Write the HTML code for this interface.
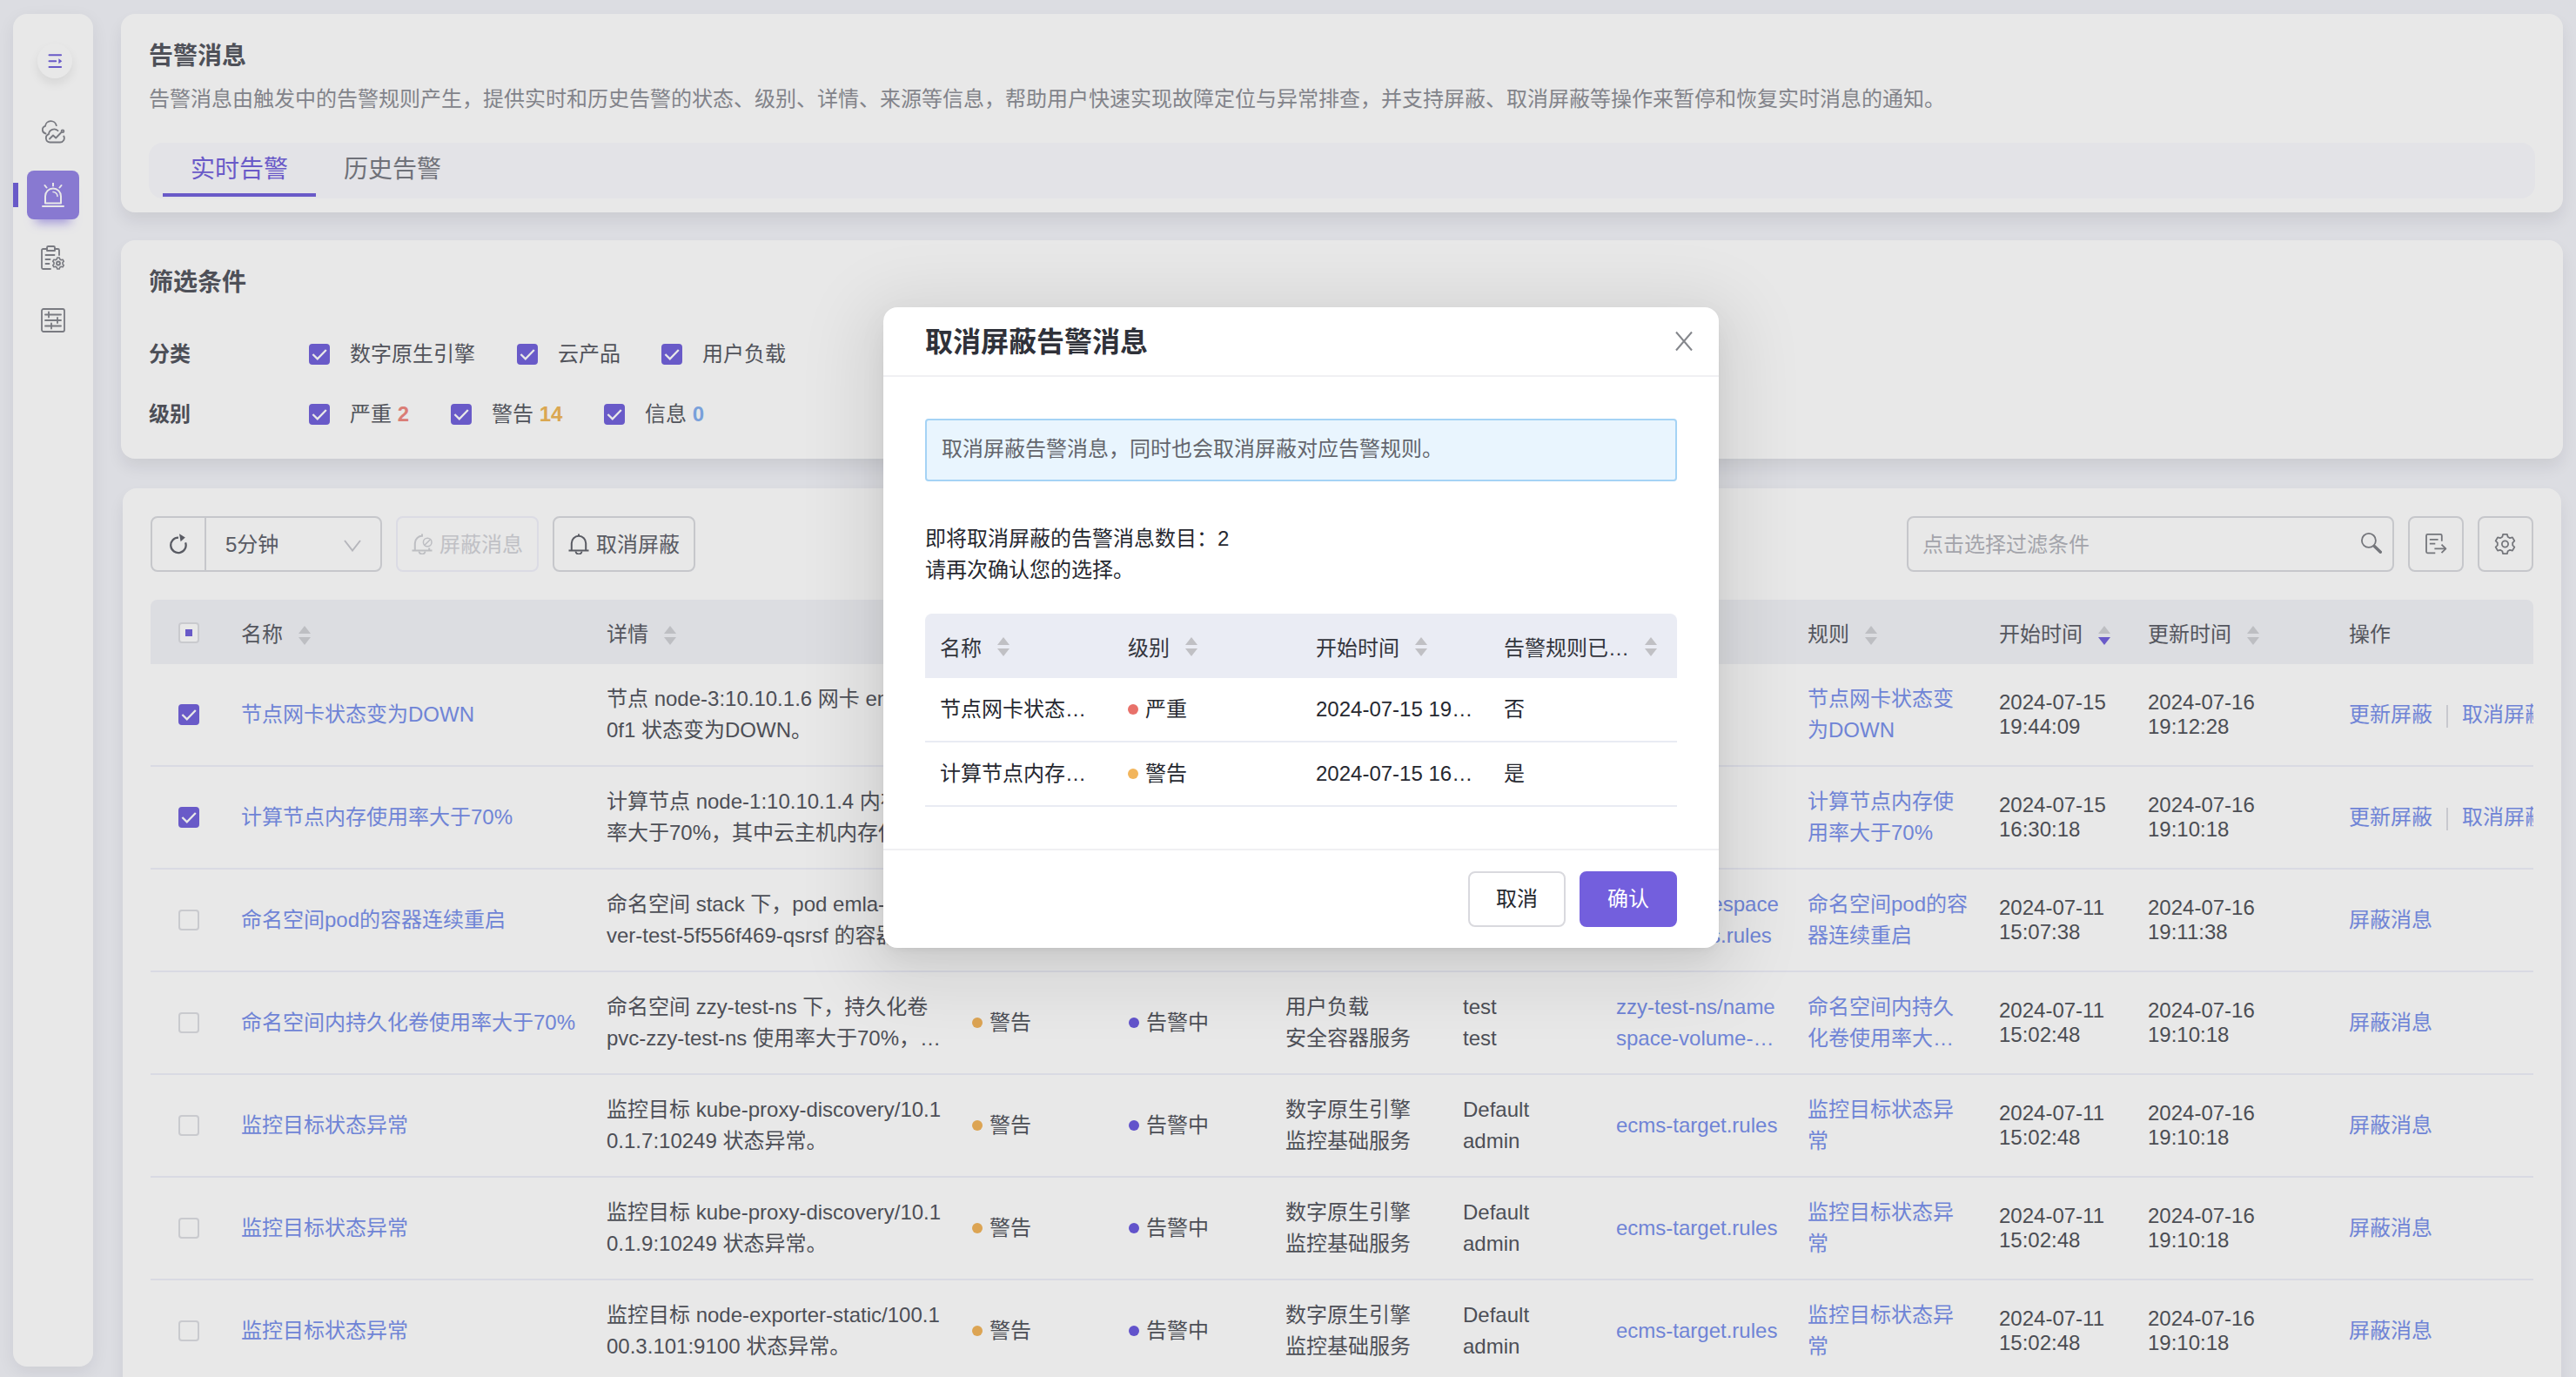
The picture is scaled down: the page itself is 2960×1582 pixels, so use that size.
<!DOCTYPE html>
<html lang="zh-CN"><head><meta charset="utf-8"><title>告警消息</title>
<style>
*{box-sizing:border-box;margin:0;padding:0}
html,body{width:2960px;height:1582px;overflow:hidden}
body{background:#f2f3f9;font-family:"Liberation Sans","Noto Sans CJK SC",sans-serif;color:#3f4149;font-size:24px;position:relative}
i{font-style:normal}
a{color:inherit;text-decoration:none}
/* sidebar */
.side{position:absolute;left:15px;top:16px;width:92px;height:1554px;background:#fff;border-radius:16px;box-shadow:0 6px 20px rgba(8,8,14,.07)}
.collapse{position:absolute;left:28px;top:34px;width:40px;height:40px;border-radius:50%;background:#fff;box-shadow:0 6px 12px rgba(0,0,0,.08)}
.collapse svg{position:absolute;left:0;top:0;width:40px;height:40px}
.nav{position:absolute;left:16px;width:60px;height:56px;border-radius:8px}
.nav svg{position:absolute;left:16px;top:14px;width:28px;height:28px}
.nav.act{background:#9686e6;box-shadow:0 14px 12px -10px rgba(125,105,230,.6)}
.ind{position:absolute;left:0;top:194px;width:6px;height:28px;background:#7463dc}
/* cards */
.card{position:absolute;left:139px;width:2806px;background:#fff;border-radius:16px;box-shadow:0 10px 18px rgba(8,8,14,.07)}
.c1{top:16px;height:228px}
.c2{top:276px;height:251px}
.c3{left:141px;width:2802px;top:561px;height:1100px}
.h1{position:absolute;left:32px;font-size:28px;font-weight:700;color:#565861;line-height:40px;white-space:nowrap}
.desc{position:absolute;left:32px;top:82px;font-size:24px;line-height:32px;color:#8f9198;white-space:nowrap}
.tabs{position:absolute;left:32px;top:148px;width:2742px;height:64px;background:#fafafe;border-radius:16px}
.tab{position:absolute;top:0;height:64px;line-height:62px;font-size:28px;color:#7b7d85;padding:0 32px;white-space:nowrap}
.tab.act{color:#7463dc}
.tab.act:after{content:"";position:absolute;left:0;right:0;bottom:2px;height:4px;background:#7463dc}
/* filter */
.flabel{position:absolute;left:32px;font-size:24px;font-weight:700;color:#54565f;line-height:32px}
.fitem{position:absolute;font-size:24px;color:#5a5c65;line-height:32px;white-space:nowrap}
.cb{display:inline-block;width:24px;height:24px;border-radius:4px;border:2px solid #dddee3;background:#fff;vertical-align:middle;position:relative}
.cb.on{background:#7463dc;border-color:#7463dc}
.cb svg{position:absolute;left:-2px;top:-2px;width:24px;height:24px}
.cb.part:after{content:"";position:absolute;left:6px;top:6px;width:8px;height:8px;background:#7463dc}
.fitem .cb{position:absolute;left:0;top:4px}
.fitem span.t{margin-left:47px}
.fitem b{font-weight:700}
/* toolbar */
.btn{position:absolute;top:32px;height:64px;border:2px solid #dadbe0;border-radius:8px;background:#fff;font-size:24px;line-height:62px;color:#62646d;white-space:nowrap}
.btn svg{position:absolute}
.btn.dis{color:#d3d4d9;border-color:#f1f1fb;background:#fff}
.search{color:#b4b5bc}
/* table */
table{border-collapse:separate;border-spacing:0;table-layout:fixed}
.tbl{position:absolute;left:32px;top:128px;width:2738px}
.tbl th{line-height:36px;padding-top:6px!important;height:74px;background:#f2f3f8;font-weight:400;text-align:left;font-size:24px;color:#5d5f68;padding:0 0 0 16px;white-space:nowrap}
.tbl th:first-child{border-radius:8px 0 0 0}
.tbl th:last-child{border-radius:0 8px 0 0}
.tbl td{height:118px;border-bottom:2px solid #eff0fa;font-size:24px;line-height:36px;color:#55575f;padding:0 0 0 16px;vertical-align:middle;white-space:nowrap;overflow:hidden}
.tbl td.tm{line-height:28px;color:#53555c}
.lnk{color:#7b92ec!important}
.dot{display:inline-block;width:12px;height:12px;border-radius:50%;margin-right:8px;vertical-align:middle;position:relative;top:-2px}
.sort{display:inline-block;position:relative;width:14px;height:24px;margin-left:18px;vertical-align:middle;top:-1px}
.sort i{position:absolute;left:0;width:0;height:0;border-left:7px solid transparent;border-right:7px solid transparent}
.sort .up{top:1px;border-bottom:9px solid #c4c5cb}
.sort .dn{bottom:1px;border-top:9px solid #c4c5cb}
.sort .dn.act{border-top-color:#7463dc}
.c-chk{padding-left:32px!important}
.vd{display:inline-block;width:2px;height:26px;background:#dcdde3;margin:0 16px;vertical-align:middle}
/* mask+modal */
.mask{position:absolute;left:0;top:0;width:2960px;height:1582px;background:rgba(0,0,0,.09)}
.modal{position:absolute;left:1015px;top:353px;width:960px;height:736px;background:#fff;border-radius:16px;box-shadow:0 6px 12px -8px rgba(0,0,0,.12),0 12px 32px 0 rgba(0,0,0,.05),0 16px 80px 24px rgba(0,0,0,.09);color:#262830}
.mtitle{position:absolute;left:48px;top:18px;font-size:32px;font-weight:700;line-height:44px;color:#2f3139}
.mclose{position:absolute;left:909px;top:27px;width:22px;height:24px;line-height:0}
.mhr{position:absolute;left:0;width:960px;height:2px;background:#f0f0f3}
.alert{position:absolute;left:48px;top:128px;width:864px;height:72px;border:2px solid #a5d3f5;background:#e9f5fe;border-radius:4px;font-size:24px;line-height:65px;padding-left:17px;color:#63656c}
.mtext{position:absolute;left:48px;top:248px;font-size:24px;line-height:36px;color:#262830}
.mtbl{position:absolute;left:48px;top:352px;width:864px}
.mtbl th{line-height:36px;padding-top:5px!important;height:74px;background:#eaecf4;font-weight:400;text-align:left;font-size:24px;color:#33353d;padding:0 0 0 17px;white-space:nowrap}
.mtbl th:first-child{border-radius:8px 0 0 0}
.mtbl th:last-child{border-radius:0 8px 0 0}
.mtbl td{line-height:36px;padding-bottom:0px!important;height:74px;border-bottom:2px solid #e9ebf3;font-size:24px;color:#262830;padding:0 0 0 17px;white-space:nowrap}
.mbtn{position:absolute;top:648px;width:112px;height:64px;border-radius:8px;font-size:24px;line-height:60px;text-align:center}
.mbtn.c{left:672px;border:2px solid #d9d9de;color:#262830;background:#fff}
.mbtn.ok{left:800px;border:2px solid #735fdd;background:#735fdd;color:#fff}

.tbl th .cb{top:-4px}
.tbl td .cb{top:-2px}

.tbl .sort .up{border-bottom-color:#d0d1d6}
.tbl .sort .dn{border-top-color:#d0d1d6}
.tbl .sort .dn.act{border-top-color:#7463dc}
.mtbl .sort .up{border-bottom-color:#c0c0c4}
.mtbl .sort .dn{border-top-color:#c0c0c4}

.mtbl .sort{top:-3px}

</style></head>
<body>
<div class="side">
  <div class="collapse"><svg viewBox="0 0 40 40"><path d="M13.500 13.300H27.100M13.500 20.200H21.200M13.500 27.100H27.100" stroke="#7463dc" stroke-width="2" stroke-linecap="round" fill="none"/><path d="M24.400 17.200L28.300 20.200 24.400 23.200z" fill="#7463dc"/></svg></div>
  <div class="nav" style="top:108px"><svg viewBox="0 0 28 28" fill="none" stroke="#85878e" stroke-width="1.8" stroke-linecap="round" stroke-linejoin="round"><path d="M5.5 15.5A4.5 4.5 0 0 1 5 6.800 6.500 6.500 0 0 1 17.800 6.200"/><path d="M10.500 25.500H22A4.800 4.800 0 0 0 26.300 18.500M10.500 25.500A4.800 4.800 0 0 1 9 16.200 6.200 6.200 0 0 1 19.500 12.200"/><path d="M10 21.500l4-4 3.200 3 6.300-6.500"/><circle cx="25" cy="12.800" r="1.400"/></svg></div>
  <div class="ind"></div>
  <div class="nav act" style="top:180px"><svg viewBox="0 0 28 28" fill="none" stroke="#fff" stroke-width="2" stroke-linecap="round"><path d="M5 23.500V15.500a9 9 0 0 1 18 0V23.500z" stroke-linejoin="round"/><path d="M2 27H26M14 .5v3M4.500 3l2 2.500M23.500 3l-2 2.500"/><path d="M14 10.500a5 5 0 0 1 5 5" stroke-width="1.600"/></svg></div>
  <div class="nav" style="top:252px"><svg viewBox="0 0 28 28" fill="none" stroke="#85878e" stroke-width="1.800" stroke-linecap="round" stroke-linejoin="round"><path d="M7 4H2.500A1.500 1.500 0 0 0 1 5.500v20A1.500 1.500 0 0 0 2.500 27H11M16 4h3.500A1.500 1.500 0 0 1 21 5.500V11"/><path d="M7 6V2.500A1.500 1.500 0 0 1 8.500 1h6A1.500 1.500 0 0 1 16 2.500V6z"/><path d="M5.500 11h10M5.500 16h5M5.500 21h4"/><circle cx="20" cy="20.500" r="2"/><path d="M18.800 14l2.400 0 .5 1.800 1.600 .9 1.800-.5 1.200 2.100-1.300 1.300v1.800l1.300 1.300-1.200 2.100-1.800-.5-1.600 .9-.5 1.800h-2.400l-.5-1.800-1.600-.9-1.800 .5-1.200-2.100 1.300-1.300v-1.800l-1.300-1.300 1.200-2.100 1.800 .5 1.600-.9z" stroke-width="1.600"/></svg></div>
  <div class="nav" style="top:324px"><svg viewBox="0 0 28 28" fill="none" stroke="#85878e" stroke-width="1.800" stroke-linecap="round" stroke-linejoin="round"><rect x="1" y="1" width="26" height="26" rx="2"/><path d="M5 7.500h18M5 14h18M5 20.500h18M9 4.500v6M19 11v6M12 17.500v6"/></svg></div>
</div>

<div class="card c1">
  <div class="h1" style="top:29px">告警消息</div>
  <div class="desc">告警消息由触发中的告警规则产生，提供实时和历史告警的状态、级别、详情、来源等信息，帮助用户快速实现故障定位与异常排查，并支持屏蔽、取消屏蔽等操作来暂停和恢复实时消息的通知。</div>
  <div class="tabs">
    <div class="tab act" style="left:16px">实时告警</div>
    <div class="tab" style="left:192px">历史告警</div>
  </div>
</div>

<div class="card c2">
  <div class="h1" style="top:29px">筛选条件</div>
  <div class="flabel" style="top:115px">分类</div>
  <div class="fitem" style="left:216px;top:115px"><span class="cb on"><svg viewBox="0 0 24 24"><path d="M4.400 12l5.400 5.400L19.800 7" fill="none" stroke="#fff" stroke-width="2.300"/></svg></span><span class="t">数字原生引擎</span></div>
  <div class="fitem" style="left:455px;top:115px"><span class="cb on"><svg viewBox="0 0 24 24"><path d="M4.400 12l5.400 5.400L19.800 7" fill="none" stroke="#fff" stroke-width="2.300"/></svg></span><span class="t">云产品</span></div>
  <div class="fitem" style="left:621px;top:115px"><span class="cb on"><svg viewBox="0 0 24 24"><path d="M4.400 12l5.400 5.400L19.800 7" fill="none" stroke="#fff" stroke-width="2.300"/></svg></span><span class="t">用户负载</span></div>
  <div class="flabel" style="top:184px">级别</div>
  <div class="fitem" style="left:216px;top:184px"><span class="cb on"><svg viewBox="0 0 24 24"><path d="M4.400 12l5.400 5.400L19.800 7" fill="none" stroke="#fff" stroke-width="2.300"/></svg></span><span class="t">严重 <b style="color:#f08a82">2</b></span></div>
  <div class="fitem" style="left:379px;top:184px"><span class="cb on"><svg viewBox="0 0 24 24"><path d="M4.400 12l5.400 5.400L19.800 7" fill="none" stroke="#fff" stroke-width="2.300"/></svg></span><span class="t">警告 <b style="color:#f0b85a">14</b></span></div>
  <div class="fitem" style="left:555px;top:184px"><span class="cb on"><svg viewBox="0 0 24 24"><path d="M4.400 12l5.400 5.400L19.800 7" fill="none" stroke="#fff" stroke-width="2.300"/></svg></span><span class="t">信息 <b style="color:#85b0f0">0</b></span></div>
</div>

<div class="card c3">
  <div class="btn" style="left:32px;width:266px">
    <span style="position:absolute;left:16px;top:14px;line-height:0"><svg viewBox="0 0 28 28" width="28" height="28" fill="none" stroke="#62646d" stroke-width="2.300"><path d="M22.100 14.400A8.700 8.700 0 1 1 14 8.700"/><path d="M15 4.300L21.800 8.600 16.600 13.300z" fill="#62646d" stroke="none"/></svg></span>
    <span style="position:absolute;left:60px;top:-2px;width:2px;height:64px;background:#dadbe0"></span>
    <span style="position:absolute;left:84px;top:0">5分钟</span>
    <span style="position:absolute;left:220px;top:25px;line-height:0"><svg viewBox="0 0 20 14" width="20" height="14" fill="none" stroke="#c8c9cf" stroke-width="2"><path d="M1 1l9 11.500L19 1"/></svg></span>
  </div>
  <div class="btn dis" style="left:314px;width:164px">
    <span style="position:absolute;left:16px;top:18px;line-height:0"><svg viewBox="0 0 24 24" width="24" height="24" fill="none" stroke="#d0d1d6" stroke-width="2"><path d="M3.800 19.600V11a8.200 8.200 0 0 1 9-8.100M20.200 16.500V19.600M.500 19.600H23.500M12 .600v2.200"/><path d="M8.500 20.600a3.500 3 0 0 0 7 0" stroke-width="1.800"/><circle cx="18.200" cy="10" r="4.800" stroke-width="1.500"/><path d="M14.900 13.300l6.600-6.600" stroke-width="1.500"/></svg></span>
    <span style="position:absolute;left:48px;top:0">屏蔽消息</span>
  </div>
  <div class="btn" style="left:494px;width:164px">
    <span style="position:absolute;left:16px;top:18px;line-height:0"><svg viewBox="0 0 24 24" width="24" height="24" fill="none" stroke="#62646d" stroke-width="2" stroke-linecap="butt"><path d="M3.800 19.600V11a8.200 8.200 0 0 1 16.400 0V19.600M.500 19.600H23.500M12 .600v2.200"/><path d="M8.500 20.600a3.500 3 0 0 0 7 0" stroke-width="1.800"/></svg></span>
    <span style="position:absolute;left:48px;top:0">取消屏蔽</span>
  </div>
  <div class="btn search" style="left:2050px;width:560px">
    <span style="position:absolute;left:16px;top:0">点击选择过滤条件</span>
    <span style="position:absolute;left:516px;top:13px;line-height:0"><svg viewBox="0 0 28 28" width="28" height="28" fill="none" stroke="#808288" stroke-width="1.800"><circle cx="12.900" cy="12.900" r="8"/><path d="M19.300 19.500L26.300 26.300" stroke-width="3.400" stroke-linecap="round"/></svg></span>
  </div>
  <div class="btn" style="left:2626px;width:64px"><span style="position:absolute;left:0;top:0;line-height:0"><svg viewBox="0 0 60 60" width="60" height="60" fill="none" stroke="#808288" stroke-width="1.800" stroke-linecap="butt" stroke-linejoin="round"><path d="M36.800 26.800V20.400A1.500 1.500 0 0 0 35.300 18.900H20.500A1.500 1.500 0 0 0 19 20.400V38.800A1.500 1.500 0 0 0 20.500 40.300H29.300"/><path d="M22.800 24.900H32.600M22.800 29.600H29.300M28.400 35.400H41"/><path d="M36.500 30.600L41.400 35.400 36.500 40.200"/></svg></span></div>
  <div class="btn" style="left:2706px;width:64px"><span style="position:absolute;left:0;top:0;line-height:0"><svg viewBox="0 0 60 60" width="60" height="60" fill="none" stroke="#808288" stroke-width="1.800" stroke-linejoin="round"><path d="M32.65 21.78 L31.87 18.85 L27.13 18.85 L26.35 21.78 L23.96 23.16 L21.03 22.37 L18.66 26.48 L20.81 28.62 L20.81 31.38 L18.66 33.52 L21.03 37.63 L23.96 36.84 L26.35 38.22 L27.13 41.15 L31.87 41.15 L32.65 38.22 L35.04 36.84 L37.97 37.63 L40.34 33.52 L38.19 31.38 L38.19 28.62 L40.34 26.48 L37.97 22.37 L35.04 23.16z"/><circle cx="29.5" cy="30" r="3.600"/></svg></span></div>

  <table class="tbl">
    <colgroup><col style="width:88px"><col style="width:420px"><col style="width:420px"><col style="width:180px"><col style="width:180px"><col style="width:204px"><col style="width:176px"><col style="width:220px"><col style="width:220px"><col style="width:171px"><col style="width:231px"><col style="width:228px"></colgroup>
    <thead><tr>
      <th class="c-chk"><span class="cb part"></span></th>
      <th>名称<span class="sort"><i class="up"></i><i class="dn"></i></span></th><th>详情<span class="sort"><i class="up"></i><i class="dn"></i></span></th><th>级别<span class="sort"><i class="up"></i><i class="dn"></i></span></th><th>状态<span class="sort"><i class="up"></i><i class="dn"></i></span></th><th>分类<span class="sort"><i class="up"></i><i class="dn"></i></span></th><th>项目<span class="sort"><i class="up"></i><i class="dn"></i></span></th><th>规则组<span class="sort"><i class="up"></i><i class="dn"></i></span></th><th>规则<span class="sort"><i class="up"></i><i class="dn"></i></span></th><th>开始时间<span class="sort"><i class="up"></i><i class="dn act"></i></span></th><th>更新时间<span class="sort"><i class="up"></i><i class="dn"></i></span></th><th>操作</th>
    </tr></thead>
    <tbody>
<tr>
<td class="c-chk"><span class="cb on"><svg viewBox="0 0 24 24"><path d="M4.400 12l5.400 5.400L19.800 7" fill="none" stroke="#fff" stroke-width="2.300"/></svg></span></td>
<td class="lnk">节点网卡状态变为DOWN</td>
<td>节点 node-3:10.10.1.6 网卡 enp0s2<br>0f1 状态变为DOWN。</td>
<td><span class="dot" style="background:#e8716a"></span>严重</td>
<td><span class="dot" style="background:#9aa0ad"></span>已屏蔽</td>
<td>云产品<br>计算服务</td>
<td>-<br>-</td>
<td class="lnk">node.rules</td>
<td class="lnk">节点网卡状态变<br>为DOWN</td>
<td class="tm">2024-07-15<br>19:44:09</td>
<td class="tm">2024-07-16<br>19:12:28</td>
<td class="ops lnk"><a>更新屏蔽</a><span class="vd"></span><a>取消屏蔽</a></td>
</tr>
<tr>
<td class="c-chk"><span class="cb on"><svg viewBox="0 0 24 24"><path d="M4.400 12l5.400 5.400L19.800 7" fill="none" stroke="#fff" stroke-width="2.300"/></svg></span></td>
<td class="lnk">计算节点内存使用率大于70%</td>
<td>计算节点 node-1:10.10.1.4 内存使用<br>率大于70%，其中云主机内存使用…</td>
<td><span class="dot" style="background:#f2b55c"></span>警告</td>
<td><span class="dot" style="background:#9aa0ad"></span>已屏蔽</td>
<td>云产品<br>计算服务</td>
<td>-<br>-</td>
<td class="lnk">node.rules</td>
<td class="lnk">计算节点内存使<br>用率大于70%</td>
<td class="tm">2024-07-15<br>16:30:18</td>
<td class="tm">2024-07-16<br>19:10:18</td>
<td class="ops lnk"><a>更新屏蔽</a><span class="vd"></span><a>取消屏蔽</a></td>
</tr>
<tr>
<td class="c-chk"><span class="cb"></span></td>
<td class="lnk">命名空间pod的容器连续重启</td>
<td>命名空间 stack 下，pod emla-ser<br>ver-test-5f556f469-qsrsf 的容器…</td>
<td><span class="dot" style="background:#f2b55c"></span>警告</td>
<td><span class="dot" style="background:#6c5ce0"></span>告警中</td>
<td>用户负载<br>安全容器服务</td>
<td>test<br>test</td>
<td class="lnk">stack/namespace<br>-pod-status.rules</td>
<td class="lnk">命名空间pod的容<br>器连续重启</td>
<td class="tm">2024-07-11<br>15:07:38</td>
<td class="tm">2024-07-16<br>19:11:38</td>
<td class="ops lnk"><a>屏蔽消息</a></td>
</tr>
<tr>
<td class="c-chk"><span class="cb"></span></td>
<td class="lnk">命名空间内持久化卷使用率大于70%</td>
<td>命名空间 zzy-test-ns 下，持久化卷<br>pvc-zzy-test-ns 使用率大于70%，…</td>
<td><span class="dot" style="background:#f2b55c"></span>警告</td>
<td><span class="dot" style="background:#6c5ce0"></span>告警中</td>
<td>用户负载<br>安全容器服务</td>
<td>test<br>test</td>
<td class="lnk">zzy-test-ns/name<br>space-volume-…</td>
<td class="lnk">命名空间内持久<br>化卷使用率大…</td>
<td class="tm">2024-07-11<br>15:02:48</td>
<td class="tm">2024-07-16<br>19:10:18</td>
<td class="ops lnk"><a>屏蔽消息</a></td>
</tr>
<tr>
<td class="c-chk"><span class="cb"></span></td>
<td class="lnk">监控目标状态异常</td>
<td>监控目标 kube-proxy-discovery/10.1<br>0.1.7:10249 状态异常。</td>
<td><span class="dot" style="background:#f2b55c"></span>警告</td>
<td><span class="dot" style="background:#6c5ce0"></span>告警中</td>
<td>数字原生引擎<br>监控基础服务</td>
<td>Default<br>admin</td>
<td class="lnk">ecms-target.rules</td>
<td class="lnk">监控目标状态异<br>常</td>
<td class="tm">2024-07-11<br>15:02:48</td>
<td class="tm">2024-07-16<br>19:10:18</td>
<td class="ops lnk"><a>屏蔽消息</a></td>
</tr>
<tr>
<td class="c-chk"><span class="cb"></span></td>
<td class="lnk">监控目标状态异常</td>
<td>监控目标 kube-proxy-discovery/10.1<br>0.1.9:10249 状态异常。</td>
<td><span class="dot" style="background:#f2b55c"></span>警告</td>
<td><span class="dot" style="background:#6c5ce0"></span>告警中</td>
<td>数字原生引擎<br>监控基础服务</td>
<td>Default<br>admin</td>
<td class="lnk">ecms-target.rules</td>
<td class="lnk">监控目标状态异<br>常</td>
<td class="tm">2024-07-11<br>15:02:48</td>
<td class="tm">2024-07-16<br>19:10:18</td>
<td class="ops lnk"><a>屏蔽消息</a></td>
</tr>
<tr>
<td class="c-chk"><span class="cb"></span></td>
<td class="lnk">监控目标状态异常</td>
<td>监控目标 node-exporter-static/100.1<br>00.3.101:9100 状态异常。</td>
<td><span class="dot" style="background:#f2b55c"></span>警告</td>
<td><span class="dot" style="background:#6c5ce0"></span>告警中</td>
<td>数字原生引擎<br>监控基础服务</td>
<td>Default<br>admin</td>
<td class="lnk">ecms-target.rules</td>
<td class="lnk">监控目标状态异<br>常</td>
<td class="tm">2024-07-11<br>15:02:48</td>
<td class="tm">2024-07-16<br>19:10:18</td>
<td class="ops lnk"><a>屏蔽消息</a></td>
</tr>
    </tbody>
  </table>
</div>

<div class="mask"></div>

<div class="modal">
  <div class="mtitle">取消屏蔽告警消息</div>
  <div class="mclose"><svg viewBox="0 0 22 24" width="22" height="24" fill="none" stroke="#85878c" stroke-width="2"><path d="M2 1.500l18 21M20 1.500L2 22.500"/></svg></div>
  <div class="mhr" style="top:78px"></div>
  <div class="alert">取消屏蔽告警消息，同时也会取消屏蔽对应告警规则。</div>
  <div class="mtext">即将取消屏蔽的告警消息数目：2<br>请再次确认您的选择。</div>
  <table class="mtbl">
    <colgroup><col style="width:216px"><col style="width:216px"><col style="width:216px"><col style="width:216px"></colgroup>
    <thead><tr><th>名称<span class="sort"><i class="up"></i><i class="dn"></i></span></th><th>级别<span class="sort"><i class="up"></i><i class="dn"></i></span></th><th>开始时间<span class="sort"><i class="up"></i><i class="dn"></i></span></th><th>告警规则已…<span class="sort" style="margin-left:18px"><i class="up"></i><i class="dn"></i></span></th></tr></thead>
    <tbody>
      <tr><td>节点网卡状态…</td><td><span class="dot" style="background:#e8716a"></span>严重</td><td>2024-07-15 19…</td><td>否</td></tr>
      <tr><td>计算节点内存…</td><td><span class="dot" style="background:#f2b55c"></span>警告</td><td>2024-07-15 16…</td><td>是</td></tr>
    </tbody>
  </table>
  <div class="mhr" style="top:622px"></div>
  <div class="mbtn c">取消</div>
  <div class="mbtn ok">确认</div>
</div>

</body></html>
